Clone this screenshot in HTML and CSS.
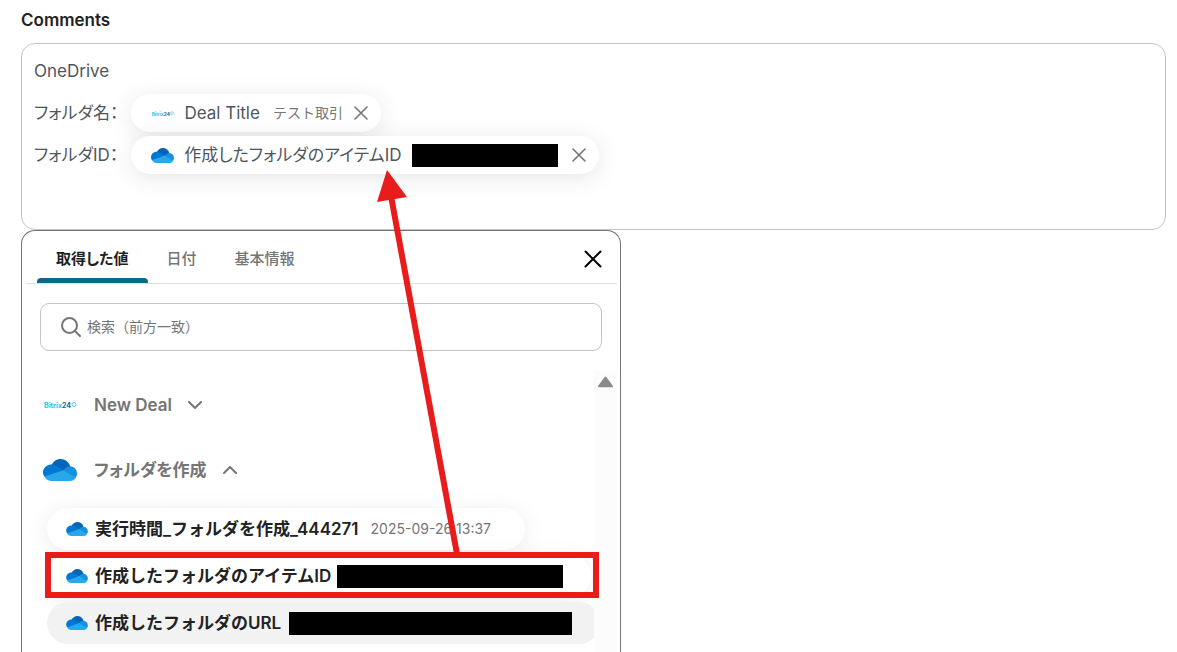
FILE: index.html
```
<!DOCTYPE html>
<html lang="ja">
<head>
  <meta charset="utf-8">
  <title>Comments</title>
  <link rel="stylesheet" href="styles.css">
</head>

<body>
  <!-- shared icons -->
  <svg class="defs" aria-hidden="true">
    <symbol id="cloud" viewBox="0 0 34 22">
      <path fill="#0364b8" d="M8 7C10 2.500 13.500 0 17.500 0C22 0 26 3 27.300 7.500L21 12L11 9z"/>
      <path fill="#0078d4" d="M2 18C0.700 16.700 0 15.500 0 13.500C0 9.500 3.500 5.500 8 5.500C10 5.500 12 6 13.500 7L20.500 11.200L10 17z"/>
      <path fill="#1490df" d="M20.500 11.200C22.500 8.500 24.500 7.300 27.300 7.300C31 7.500 34 10.500 34 14.500C34 16 33.600 17.500 32.800 18.700L25 17z"/>
      <path fill="#28a8ea" d="M1.500 17.600L20.500 11.200L32.800 18.700C31.500 20.800 29.500 22 27 22H8C5 22 3 20.500 1.500 17.600z"/>
    </symbol>
    <symbol id="cross" viewBox="0 0 16 16">
      <path d="M2 2L14 14M14 2L2 14" fill="none" stroke="currentColor" stroke-linecap="round"/>
    </symbol>
  </svg>

  <h1 class="label" id="comments-label">Comments</h1>

  <div class="editor" role="textbox" aria-multiline="true" aria-labelledby="comments-label" contenteditable="true" spellcheck="false">
    <div class="line">OneDrive</div>
    <div class="line">
      <span>フォルダ名：</span>
      <span class="chip" contenteditable="false">
        <svg class="chip-icon" viewBox="0 0 34 10">
          <text x="1" y="8" class="bx-text">Bitrix<tspan class="bx-num">24</tspan></text>
          <circle cx="31" cy="4.500" r="2" class="bx-ring"/>
        </svg>
        <span>Deal Title</span>
        <span class="sample">テスト取引</span>
        <button class="remove" aria-label="削除"><svg><use href="#cross"/></svg></button>
      </span>
    </div>
    <div class="line">
      <span>フォルダID：</span>
      <span class="chip" contenteditable="false">
        <svg class="chip-icon"><use href="#cloud"/></svg>
        <span>作成したフォルダのアイテムID</span>
        <span class="mask mask-s"></span>
        <button class="remove" aria-label="削除"><svg><use href="#cross"/></svg></button>
      </span>
    </div>
  </div>

  <div class="panel">
    <div class="tabs">
      <button class="tab active">取得した値</button>
      <button class="tab">日付</button>
      <button class="tab">基本情報</button>
      <button class="close" aria-label="閉じる"><svg><use href="#cross"/></svg></button>
    </div>

    <label class="search">
      <svg viewBox="0 0 20 20"><circle cx="8.500" cy="8.500" r="7.500"/><path d="M14 14L19 19"/></svg>
      <input type="text" placeholder="検索（前方一致）" aria-label="検索">
    </label>

    <div class="results">
      <div class="list">
        <button class="group">
          <svg class="group-icon" viewBox="0 0 34 10">
            <text x="1" y="8" class="bx-text">Bitrix<tspan class="bx-num">24</tspan></text>
            <circle cx="31" cy="4.500" r="2" class="bx-ring"/>
          </svg>
          <span>New Deal</span>
          <svg class="arrow" viewBox="0 0 14 8"><path d="M1 1L7 7L13 1"/></svg>
        </button>
        <button class="group">
          <svg class="group-icon"><use href="#cloud"/></svg>
          <span>フォルダを作成</span>
          <svg class="arrow" viewBox="0 0 14 8"><path d="M1 7L7 1L13 7"/></svg>
        </button>
        <div class="values">
          <button class="value">
            <svg class="value-icon"><use href="#cloud"/></svg>
            <span>実行時間_フォルダを作成_444271</span>
            <span class="date">2025-09-26 13:37</span>
          </button>
          <button class="value wide">
            <svg class="value-icon"><use href="#cloud"/></svg>
            <span>作成したフォルダのアイテムID</span>
            <span class="mask mask-m"></span>
          </button>
          <button class="value wide hover">
            <svg class="value-icon"><use href="#cloud"/></svg>
            <span>作成したフォルダのURL</span>
            <span class="mask mask-l"></span>
          </button>
        </div>
      </div>
      <div class="scroll">
        <svg viewBox="0 0 14 10"><path d="M7 1L13 9H1z"/></svg>
      </div>
    </div>
  </div>

  <!-- red frame and arrow drawn over the page -->
  <svg class="note" width="640" height="652" aria-hidden="true">
    <rect x="48" y="555" width="548" height="40"/>
    <path class="shaft" d="M457 554L391 196"/>
    <path class="head" d="M387 170L407 197L377 202z"/>
  </svg>
</body>
</html>
```
FILE: styles.css
```
* { box-sizing: border-box; }

body {
  margin: 0;
  padding: 0 11px 0 21px;
  height: 100vh;
  display: flex;
  flex-direction: column;
  position: relative;
  overflow: hidden;
  background: #fff;
  color: #4f5660;
  font-family: Inter, "Noto Sans CJK JP", sans-serif;
  font-size: 17px;
  line-height: 24px;
  font-feature-settings: "palt";
}

button, input { font: inherit; font-feature-settings: inherit; color: inherit; }
button { border: 0; padding: 0; background: none; cursor: pointer; white-space: nowrap; }
svg { display: block; flex: none; }
.defs { position: absolute; width: 0; height: 0; }
.bx-text { font-size: 7px; font-weight: 700; fill: #1fc3ee; }
.bx-num { fill: #17628f; }
.bx-ring { fill: none; stroke: #62b9dc; }

.label { margin: 8px 0 11px; font-size: 17px; font-weight: 600; color: #222; }

/* editor */
.editor {
  flex: none;
  min-height: 187px;
  padding: 6px 12px;
  border: 1px solid #c4c4c4;
  border-radius: 14px;
  outline: none;
}
.line { display: flex; align-items: center; gap: 13px; height: 42px; }

.chip {
  display: flex;
  align-items: center;
  height: 38px;
  padding: 0 12px 0 20px;
  border-radius: 19px;
  background: #fff;
  box-shadow: 0 4px 24px rgba(0,0,0,.1);
}
.chip-icon { width: 23px; height: 15px; margin-right: 10px; }
.sample { margin-left: 13px; font-size: 14px; font-feature-settings: normal; color: #777; }
.remove { margin-left: 10px; color: #757575; }
.remove svg { width: 16px; height: 16px; stroke-width: 1.6; }

.mask { height: 23px; background: #000; }
.mask-s { width: 146px; margin: 0 3px 0 11px; }
.mask-m { width: 226px; margin-left: 6px; }
.mask-l { width: 283px; margin-left: 8px; }

/* panel */
.panel {
  flex: 1;
  min-height: 0;
  width: 600px;
  max-width: 100%;
  display: flex;
  flex-direction: column;
  padding: 0 3px 0 4px;
  border: 1px solid #757575;
  border-bottom: 0;
  border-radius: 14px 14px 0 0;
  background: #fff;
}
.tabs { display: flex; flex: none; height: 53px; padding: 0 12px 0 11px; border-bottom: 1px solid #e0e0e0; }
.tab { position: relative; padding: 4px 19px 0; font-size: 15px; font-weight: 500; color: #757575; }
.active { color: #1f1f1f; font-weight: 600; }
.active::after {
  content: "";
  position: absolute;
  left: 0;
  right: 0;
  bottom: 0;
  height: 5px;
  border-radius: 4px 4px 0 0;
  background: #0b6a87;
}
.close { margin-left: auto; padding: 4px 2px 0; color: #000; }
.close svg { width: 20px; height: 20px; stroke-width: 1.6; }

.search {
  display: flex;
  flex: none;
  align-items: center;
  gap: 6px;
  height: 48px;
  margin: 19px 15px 19px 14px;
  padding: 0 20px;
  border: 1px solid #c4c4c4;
  border-radius: 9px;
}
.search svg { width: 20px; height: 20px; fill: none; stroke: #757575; stroke-width: 2; stroke-linecap: round; }
.search input { flex: 1; min-width: 0; padding: 0; border: 0; outline: none; font-size: 14px; font-feature-settings: normal; }
.search input::placeholder { color: #757575; opacity: 1; }

.results { display: flex; flex: 1; min-height: 0; }
.list { flex: 1; min-width: 0; overflow: hidden; padding: 2px 0 0 17px; }
.group { display: flex; align-items: center; height: 65px; font-weight: 600; color: #757575; }
.group-icon { width: 34px; height: 22px; margin-right: 17px; }
.arrow { width: 14px; height: 8px; margin-left: 16px; fill: none; stroke: #757575; stroke-width: 2; stroke-linecap: round; }

.values { display: flex; flex-direction: column; align-items: flex-start; gap: 5px; padding: 6px 0 0 4px; }
.value {
  display: flex;
  align-items: center;
  height: 42px;
  padding: 0 34px 0 19px;
  border-radius: 21px;
  background: #fff;
  box-shadow: 0 4px 24px rgba(0,0,0,.08);
  font-weight: 600;
  font-feature-settings: normal;
  color: #222;
}
.wide { padding-right: 28px; }
.hover { background: #f2f2f2; box-shadow: none; }
.value-icon { width: 22px; height: 14px; margin-right: 7px; }
.date { margin-left: 12px; font-size: 14px; font-weight: 400; color: #757575; }

.scroll { width: 23px; padding: 6px 4px; background: #fcfcfc; }
.scroll svg { width: 15px; height: 12px; fill: #8b8b8b; stroke: #8b8b8b; stroke-width: 2; stroke-linejoin: round; }

.note { position: absolute; left: 0; top: 0; pointer-events: none; }
.note rect { fill: none; stroke: #e81c1c; stroke-width: 6; }
.shaft { stroke: #e81c1c; stroke-width: 6; }
.head { fill: #e81c1c; }
```
